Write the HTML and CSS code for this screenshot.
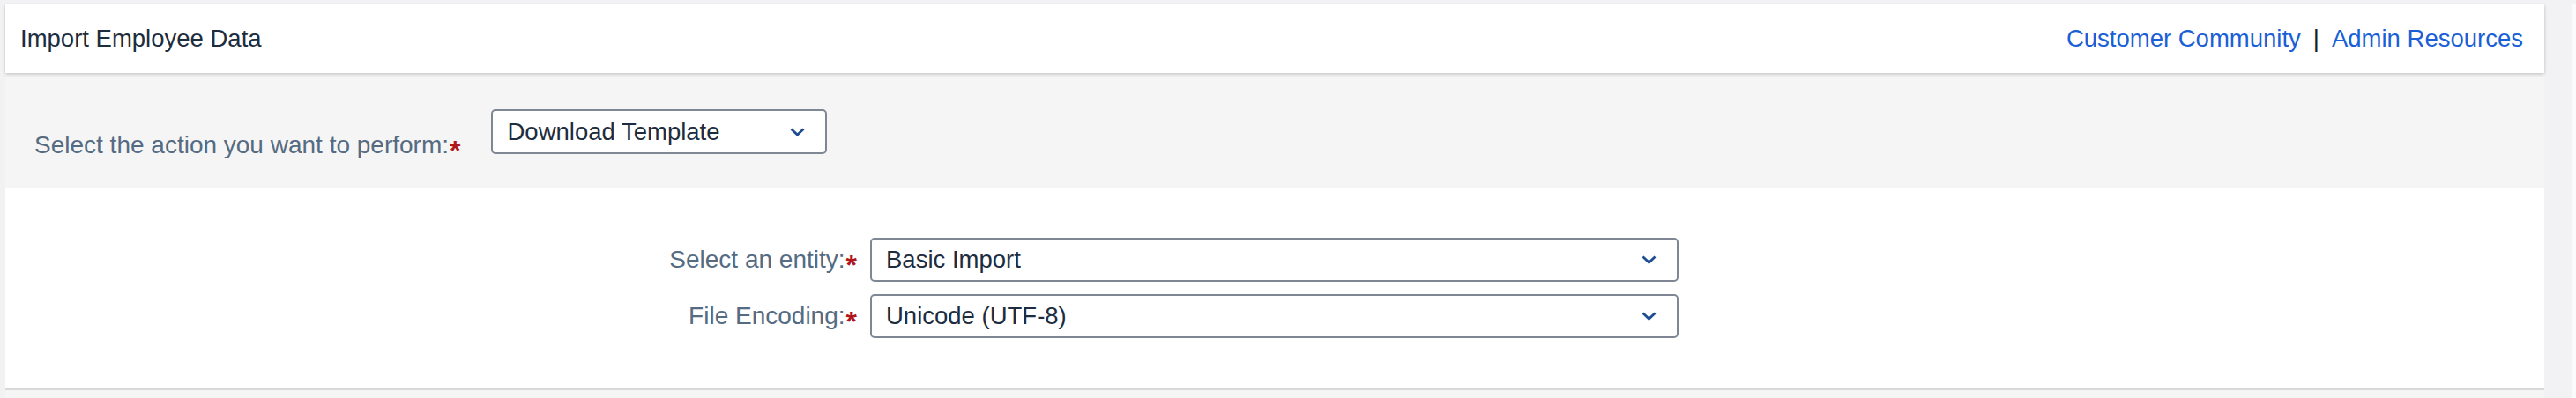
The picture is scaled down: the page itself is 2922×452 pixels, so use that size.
FILE: index.html
```html
<!DOCTYPE html>
<html lang="en">
<head>
<meta charset="utf-8">
<title>Import Employee Data</title>
<link rel="stylesheet" href="styles.css">
</head>
<body>
<div class="page">
  <main class="app">
    <header class="topbar">
      <h1 class="title">Import Employee Data</h1>
      <nav class="links">
        <a class="link" href="#">Customer Community</a>
        <span class="sep">|</span>
        <a class="link" href="#">Admin Resources</a>
      </nav>
    </header>

    <section class="action-bar">
      <label class="action-label">Select the action you want to perform:<span class="req">*</span></label>
      <div class="select select-action">
        <span class="value">Download Template</span>
        <svg class="chev" width="17" height="10" viewBox="0 0 17 10"><polyline points="1.5,1.5 8.5,8 15.5,1.5" fill="none" stroke="#1f4d91" stroke-width="2.8"/></svg>
      </div>
    </section>

    <section class="form">
      <div class="form-grid">
        <label class="field-label">Select an entity:<span class="req">*</span></label>
        <div class="select select-wide">
          <span class="value">Basic Import</span>
          <svg class="chev" width="17" height="10" viewBox="0 0 17 10"><polyline points="1.5,1.5 8.5,8 15.5,1.5" fill="none" stroke="#1f4d91" stroke-width="2.8"/></svg>
        </div>
        <label class="field-label">File Encoding:<span class="req">*</span></label>
        <div class="select select-wide">
          <span class="value">Unicode (UTF-8)</span>
          <svg class="chev" width="17" height="10" viewBox="0 0 17 10"><polyline points="1.5,1.5 8.5,8 15.5,1.5" fill="none" stroke="#1f4d91" stroke-width="2.8"/></svg>
        </div>
      </div>
    </section>
  </main>
  <div class="gutter"></div>
</div>
</body>
</html>
```

FILE: styles.css
```css
* { box-sizing: border-box; }

html, body {
  margin: 0;
  padding: 0;
  background: #f2f2f4;
  font-family: "Liberation Sans", Arial, sans-serif;
}

.page {
  display: flex;
  min-height: 452px;
  padding: 5px 0 0 6px;
}

.app {
  width: 2880px;
  flex: none;
  background: #f5f5f5;
}

.topbar {
  position: relative;
  z-index: 1;
  height: 78px;
  background: #ffffff;
  display: flex;
  align-items: center;
  justify-content: space-between;
  padding: 0 24px 0 17px;
  box-shadow: 0 0 3px rgba(0, 0, 0, 0.10), 0 2px 4px rgba(0, 0, 0, 0.14);
}

.title {
  margin: 0;
  font-size: 27.5px;
  font-weight: normal;
  color: #1d2d3e;
}

.links {
  display: flex;
  align-items: center;
  font-size: 27.5px;
}

.link {
  color: #1a5fd6;
  text-decoration: none;
}

.sep {
  color: #16202b;
  margin: 0 14px;
}

.action-bar {
  height: 131px;
  background: #f5f5f5;
  display: flex;
  align-items: flex-start;
  padding: 41px 0 0 33px;
}

.action-label {
  font-size: 28px;
  line-height: 34px;
  color: #556b82;
  margin-top: 24px;
  margin-right: 35px;
}

.req {
  color: #b0161a;
  font-weight: bold;
  font-size: 32px;
  line-height: 0;
  margin-left: 1px;
  vertical-align: -8px;
}

.select {
  display: flex;
  align-items: center;
  justify-content: space-between;
  background: #ffffff;
  border: 2px solid #7f8694;
  border-radius: 5px;
  padding: 0 23px 0 16px;
  font-size: 27.5px;
  color: #1d2d3e;
}

.select-action {
  width: 381px;
  height: 51px;
}

.select-wide {
  width: 917px;
  height: 50px;
}

.chev {
  flex: none;
  display: block;
}

.form {
  background: #ffffff;
  border-bottom: 2px solid #d8d8d8;
  padding: 56px 0 57px 0;
}

.form-grid {
  display: grid;
  grid-template-columns: 966px 917px;
  column-gap: 15px;
  row-gap: 14px;
  align-items: center;
}

.field-label {
  text-align: right;
  font-size: 28px;
  color: #556b82;
}

.gutter {
  margin-left: auto;
  width: 5px;
  border-left: 1px solid #e0e0e3;
  background: #fafafa;
}
```
